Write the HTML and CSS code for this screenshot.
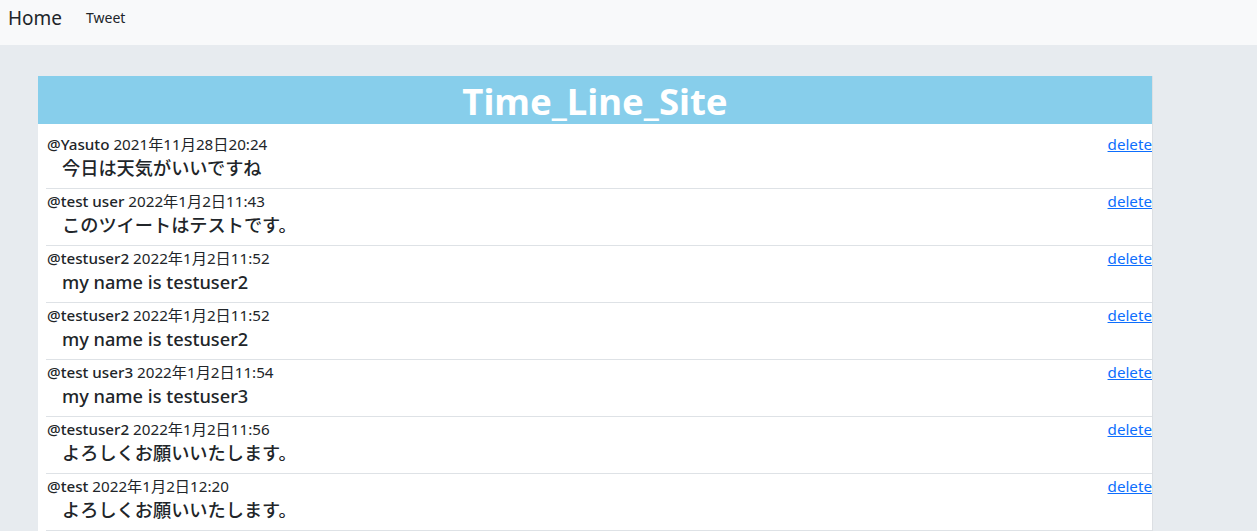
FILE: index.html
```html
<!DOCTYPE html>
<html lang="ja">
<head>
<meta charset="utf-8">
<title>Time_Line_Site</title>
<link rel="stylesheet" href="styles.css">
</head>
<body>
<nav class="navbar">
  <a class="brand" href="#">Home</a>
  <a class="nav-link" href="#">Tweet</a>
</nav>
<main class="page">
  <section class="card">
    <h1 class="title">Time_Line_Site</h1>
    <ul class="timeline">
      <li class="tweet">
        <div class="tweet-body">
          <div class="meta"><span class="user">@Yasuto</span> 2021年11月28日20:24</div>
          <p class="text">今日は天気がいいですね</p>
        </div>
        <a class="delete" href="#">delete</a>
      </li>
      <li class="tweet">
        <div class="tweet-body">
          <div class="meta"><span class="user">@test user</span> 2022年1月2日11:43</div>
          <p class="text">このツイートはテストです。</p>
        </div>
        <a class="delete" href="#">delete</a>
      </li>
      <li class="tweet">
        <div class="tweet-body">
          <div class="meta"><span class="user">@testuser2</span> 2022年1月2日11:52</div>
          <p class="text">my name is testuser2</p>
        </div>
        <a class="delete" href="#">delete</a>
      </li>
      <li class="tweet">
        <div class="tweet-body">
          <div class="meta"><span class="user">@testuser2</span> 2022年1月2日11:52</div>
          <p class="text">my name is testuser2</p>
        </div>
        <a class="delete" href="#">delete</a>
      </li>
      <li class="tweet">
        <div class="tweet-body">
          <div class="meta"><span class="user">@test user3</span> 2022年1月2日11:54</div>
          <p class="text">my name is testuser3</p>
        </div>
        <a class="delete" href="#">delete</a>
      </li>
      <li class="tweet">
        <div class="tweet-body">
          <div class="meta"><span class="user">@testuser2</span> 2022年1月2日11:56</div>
          <p class="text">よろしくお願いいたします。</p>
        </div>
        <a class="delete" href="#">delete</a>
      </li>
      <li class="tweet">
        <div class="tweet-body">
          <div class="meta"><span class="user">@test</span> 2022年1月2日12:20</div>
          <p class="text">よろしくお願いいたします。</p>
        </div>
        <a class="delete" href="#">delete</a>
      </li>
    </ul>
  </section>
</main>
</body>
</html>
```

FILE: styles.css
```css
* { box-sizing: border-box; }

html, body {
  margin: 0;
  padding: 0;
}

body {
  background: #e7ebef;
  font-family: "Noto Sans", "Noto Sans CJK JP", sans-serif;
  color: #212529;
  height: 531px;
  overflow: hidden;
}

.navbar {
  display: flex;
  align-items: center;
  height: 45px;
  background: #f8f9fa;
  padding: 0 8px 9px;
  gap: 24px;
}

.brand {
  font-size: 19px;
  color: #212529;
  text-decoration: none;
}

.nav-link {
  font-size: 14px;
  color: #212529;
  text-decoration: none;
  margin-top: -1px;
}

.page {
  padding: 31px 0 0 38px;
}

.card {
  width: 1115px;
  background: #fff;
  border-right: 1px solid #dcdfe3;
}

.title {
  margin: 0;
  height: 48px;
  background: #87ceeb;
  color: #fff;
  font-size: 36.6px;
  font-weight: 700;
  text-align: center;
  line-height: 50px;
}

.timeline {
  list-style: none;
  margin: 0;
  padding: 8px 0 0 8px;
}

.tweet {
  display: flex;
  justify-content: space-between;
  align-items: flex-start;
  height: 57px;
  padding-top: 1px;
  border-bottom: 1px solid #dee2e6;
}

.meta {
  font-size: 15.2px;
  line-height: 22px;
  padding-left: 1px;
}

.user {
  font-weight: 500;
}

.text {
  margin: 0;
  padding-left: 16px;
  font-size: 18.2px;
  font-weight: 500;
  line-height: 27px;
}

.delete {
  font-size: 15.2px;
  line-height: 22px;
  color: #0d6efd;
  text-decoration: underline;
}
```
